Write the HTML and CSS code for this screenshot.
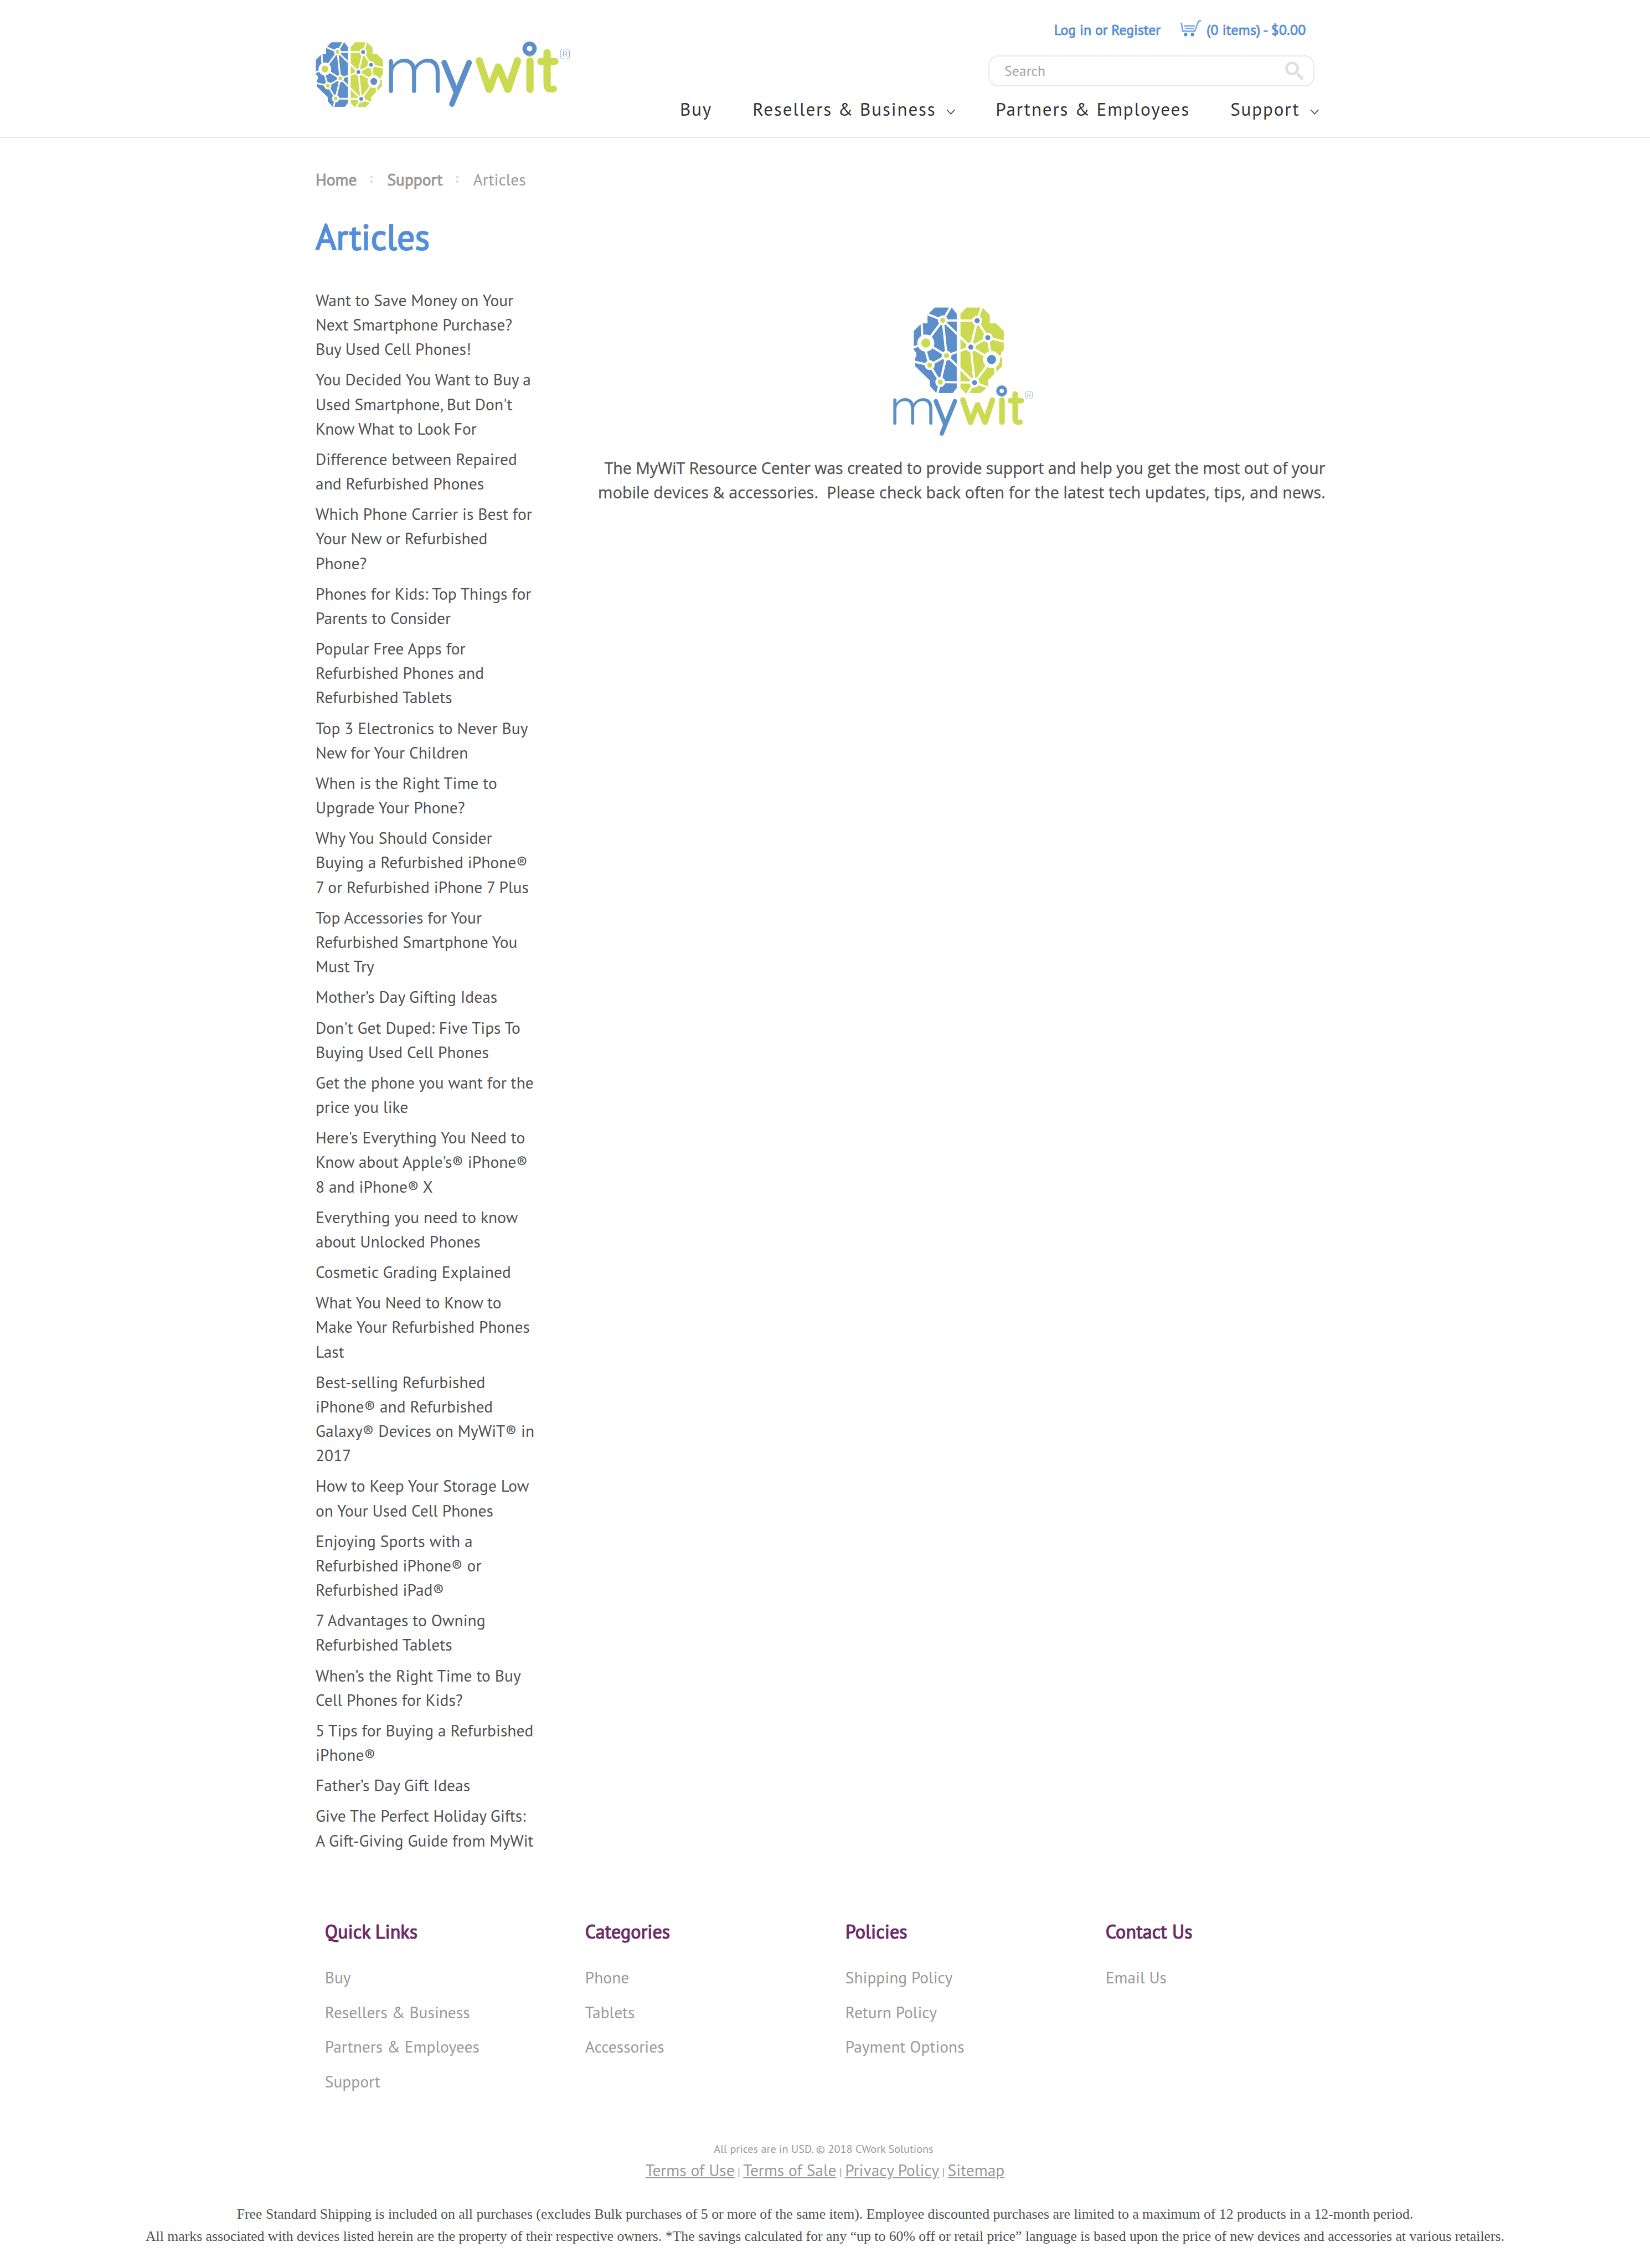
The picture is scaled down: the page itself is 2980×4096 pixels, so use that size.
FILE: index.html
```html
<!DOCTYPE html>
<html lang="en">
<head>
<meta charset="utf-8">
<title>Articles</title>
<link rel="stylesheet" href="styles.css">
</head>
<body>
<svg class="defs" width="0" height="0" aria-hidden="true">
  <defs>
    <g id="brain">
      <path fill="#5c8fc9" d="M340 66H441L470 103V540L446 570H350L311 527V495L225 411V362L232 350V332L217 315V204L262 159H298V108Z"/>
      <path fill="#cbda51" d="M528 66H622L665 110V159H701L747 204V315L731 333V345H738V410L690 458L653 495V533L610 570H522L492 540V103Z"/>
      <g stroke="#fff" stroke-width="13" fill="none">
        <path d="M436 60L388 141L298 105M388 141L288 275M269 260L263 155M388 141L410 349L288 275L212 302M388 141L553 299M388 141L590 143M277 285L311 405L410 349L553 299M410 349L373 505L311 405L220 385M410 349L575 508L373 505L354 578"/>
        <path d="M620 58L590 143L653 243L553 299L590 143M653 243L752 267M653 243L675 372L553 299L575 508L675 372M715 355L745 352M694 380L698 465M575 508L655 537M575 508L530 578"/>
      </g>
      <g fill="#fff"><circle cx="388" cy="141" r="29"/><circle cx="288" cy="275" r="50"/><circle cx="410" cy="349" r="29"/><circle cx="311" cy="405" r="29"/><circle cx="373" cy="505" r="29"/><circle cx="590" cy="143" r="29"/><circle cx="653" cy="243" r="29"/><circle cx="553" cy="299" r="29"/><circle cx="675" cy="372" r="50"/><circle cx="575" cy="508" r="29"/><circle cx="214" cy="345" r="19"/></g>
      <g fill="#cbda51"><circle cx="388" cy="141" r="15"/><circle cx="288" cy="275" r="27"/><circle cx="410" cy="349" r="15"/><circle cx="311" cy="405" r="15"/><circle cx="373" cy="505" r="15"/></g>
      <g fill="#5c8fc9"><circle cx="590" cy="143" r="15"/><circle cx="653" cy="243" r="15"/><circle cx="553" cy="299" r="15"/><circle cx="675" cy="372" r="27"/><circle cx="575" cy="508" r="15"/></g>
    </g>
    <g id="word">
      <text class="word"><tspan class="word-m" x="72.500" y="758">m</tspan><tspan class="word-y" x="327" y="754">y</tspan><tspan class="word-wit" x="488" y="750">w</tspan><tspan class="word-wit" x="707" y="750">i</tspan><tspan class="word-wit" x="773" y="750">t</tspan></text>
      <circle cx="735" cy="557" r="32" fill="#fff"/>
      <circle cx="735" cy="557" r="22.500" fill="none" stroke="#5c8fc9" stroke-width="20"/>
      <rect x="874.500" y="559" width="42" height="45" rx="14" fill="none" stroke="#7ba4d6" stroke-width="2.500"/>
      <text class="word-reg" x="895.500" y="593" text-anchor="middle">R</text>
    </g>
  </defs>
</svg>

<header class="header">
  <div class="header-inner">
    <svg class="logo" viewBox="57 0 1453 510" preserveAspectRatio="none">
      <use href="#brain" transform="translate(-98 19.100) scale(.7216 .756)"/>
      <use href="#word" transform="translate(354.500 -613.800) scale(1.255 1.294)"/>
    </svg>
    <div class="header-right">
      <div class="account">
        <a class="account-link">Log in or Register</a>
        <svg class="cart" viewBox="0 0 120 96"><g fill="none" stroke="#538ed9"><path stroke-width="8" opacity=".85" d="M0 21H6L13 66H84L103 15Q106 4 120 5"/><path stroke-width="9" opacity=".7" d="M19 35H84M25 50H78"/></g><circle cx="30" cy="86" r="10" fill="#538ed9"/><circle cx="70" cy="86" r="10" fill="#538ed9"/></svg>
        <a class="account-link items">(0 items) - $0.00</a>
      </div>
      <div class="search">
        <span class="search-text">Search</span>
        <svg class="search-icon" viewBox="0 0 108 108"><circle cx="41" cy="41" r="33" fill="none" stroke="#dedede" stroke-width="15"/><path d="M78 79L99 99" stroke="#dedede" stroke-width="17" stroke-linecap="round"/><path d="M64 64L84 84" stroke="#dedede" stroke-width="10"/></svg>
      </div>
      <nav class="nav">
        <a class="nav-item">Buy</a>
        <a class="nav-item">Resellers &amp; Business<svg class="chevron" viewBox="0 0 16 10"><path d="M1 1L8 8.500L15 1"/></svg></a>
        <a class="nav-item">Partners &amp; Employees</a>
        <a class="nav-item">Support<svg class="chevron" viewBox="0 0 16 10"><path d="M1 1L8 8.500L15 1"/></svg></a>
      </nav>
    </div>
  </div>
</header>

<main class="page">
  <div class="breadcrumb"><a class="crumb">Home</a><i class="dots"></i><a class="crumb">Support</a><i class="dots"></i><span>Articles</span></div>
  <h1 class="title">Articles</h1>
  <div class="content">
    <ul class="articles">
      <li>Want to Save Money on Your<br>Next Smartphone Purchase?<br>Buy Used Cell Phones!</li>
      <li>You Decided You Want to Buy a<br>Used Smartphone, But Don't<br>Know What to Look For</li>
      <li>Difference between Repaired<br>and Refurbished Phones</li>
      <li>Which Phone Carrier is Best for<br>Your New or Refurbished<br>Phone?</li>
      <li>Phones for Kids: Top Things for<br>Parents to Consider</li>
      <li>Popular Free Apps for<br>Refurbished Phones and<br>Refurbished Tablets</li>
      <li>Top 3 Electronics to Never Buy<br>New for Your Children</li>
      <li>When is the Right Time to<br>Upgrade Your Phone?</li>
      <li>Why You Should Consider<br>Buying a Refurbished iPhone®<br>7 or Refurbished iPhone 7 Plus</li>
      <li>Top Accessories for Your<br>Refurbished Smartphone You<br>Must Try</li>
      <li>Mother’s Day Gifting Ideas</li>
      <li>Don't Get Duped: Five Tips To<br>Buying Used Cell Phones</li>
      <li>Get the phone you want for the<br>price you like</li>
      <li>Here's Everything You Need to<br>Know about Apple's® iPhone®<br>8 and iPhone® X</li>
      <li>Everything you need to know<br>about Unlocked Phones</li>
      <li>Cosmetic Grading Explained</li>
      <li>What You Need to Know to<br>Make Your Refurbished Phones<br>Last</li>
      <li>Best-selling Refurbished<br>iPhone® and Refurbished<br>Galaxy® Devices on MyWiT® in<br>2017</li>
      <li>How to Keep Your Storage Low<br>on Your Used Cell Phones</li>
      <li>Enjoying Sports with a<br>Refurbished iPhone® or<br>Refurbished iPad®</li>
      <li>7 Advantages to Owning<br>Refurbished Tablets</li>
      <li>When’s the Right Time to Buy<br>Cell Phones for Kids?</li>
      <li>5 Tips for Buying a Refurbished<br>iPhone®</li>
      <li>Father’s Day Gift Ideas</li>
      <li>Give The Perfect Holiday Gifts:<br>A Gift-Giving Guide from MyWit</li>
    </ul>
    <section class="intro">
      <svg class="intro-logo" viewBox="4 -4 990 870"><use href="#brain"/><use href="#word"/></svg>
      <p class="intro-text"><span class="l1">The MyWiT Resource Center was created to provide support and help you get the most out of your</span><br><span class="l2">mobile devices &amp; accessories.&nbsp; Please check back often for the latest tech updates, tips, and news.</span></p>
    </section>
  </div>
</main>

<footer class="footer">
  <div class="footer-cols">
    <div><h2 class="footer-head">Quick Links</h2><ul class="footer-list"><li>Buy</li><li>Resellers &amp; Business</li><li>Partners &amp; Employees</li><li>Support</li></ul></div>
    <div><h2 class="footer-head">Categories</h2><ul class="footer-list"><li>Phone</li><li>Tablets</li><li>Accessories</li></ul></div>
    <div><h2 class="footer-head">Policies</h2><ul class="footer-list"><li>Shipping Policy</li><li>Return Policy</li><li>Payment Options</li></ul></div>
    <div><h2 class="footer-head">Contact Us</h2><ul class="footer-list"><li>Email Us</li></ul></div>
  </div>
  <p class="copyright">All prices are in USD. © 2018 CWork Solutions</p>
  <p class="terms"><a>Terms of Use</a> | <a>Terms of Sale</a> | <a>Privacy Policy</a> | <a>Sitemap</a></p>
  <p class="legal">Free Standard Shipping is included on all purchases (excludes Bulk purchases of 5 or more of the same item). Employee discounted purchases are limited to a maximum of 12 products in a 12-month period.<br>All marks associated with devices listed herein are the property of their respective owners. *The savings calculated for any “up to 60% off or retail price” language is based upon the price of new devices and accessories at various retailers.</p>
</footer>
</body>
</html>
```
FILE: styles.css
```css
* { box-sizing: border-box; margin: 0; padding: 0; }
html { background: #fff; }
body {
  width: 2980px;
  height: 4096px;
  overflow: hidden;
  font: 29.44px/44.16px "PT Sans", "Noto Sans", sans-serif;
  color: #505050;
}
ul { list-style: none; }
.defs { display: block; }

/* header */
.header { height: 248.5px; border-bottom: 2px solid #e9e9e9; }
.header-inner { width: 1840px; margin: 0 auto; display: flex; justify-content: space-between; }
.logo { width: 460.3px; height: 156.4px; margin-top: 55.2px; }
.header-right { display: flex; flex-direction: column; align-items: flex-end; padding-top: 35.6px; }
.account { display: flex; align-items: center; height: 36px; padding-right: 51.5px; color: #538ed9; font-size: 25.76px; line-height: 36px; }
.account-link { -webkit-text-stroke: 0.9px #538ed9; white-space: nowrap; }
.items { letter-spacing: 0.2px; }
.cart { width: 37px; height: 29.5px; margin: -5px 10px 0 36px; }
.search { display: flex; align-items: center; justify-content: space-between; width: 589px; height: 56.6px; margin: 28px 36.4px 0 0; padding: 0 18px 0 27.5px; border: 2px solid #e8e8e8; border-radius: 18px; font-size: 25.76px; color: #a5a5a5; }
.search-icon { width: 33.1px; height: 33.1px; }
.nav { display: flex; gap: 73.2px; margin-top: 18px; padding-right: 28px; font-size: 33.12px; line-height: 46px; letter-spacing: 1.84px; color: #333; }
.nav-item { white-space: nowrap; display: flex; align-items: center; }
.chevron { width: 16.5px; height: 10.3px; margin: 10px 0 0 18px; fill: none; stroke: #444; stroke-width: 1.6; }

/* page */
.page { width: 1840px; margin: 0 auto; padding-top: 53.4px; }
.breadcrumb { display: flex; align-items: center; color: #999; }
.crumb { -webkit-text-stroke: 1px #999; }
.dots { width: 4px; height: 12px; margin: 0 26px 0 25px; border: solid #ddd; border-width: 4px 0; }
.title { margin-top: 39.6px; font-size: 63.8px; line-height: 84px; font-weight: 400; color: #538ed9; -webkit-text-stroke: 2px #538ed9; }
.content { display: flex; height: 2996.5px; padding-top: 50.3px; }
.articles { width: 507px; white-space: nowrap; letter-spacing: 0.03px; }
.articles li { margin-bottom: 11.04px; }
.intro { width: 1320px; padding-top: 14px; text-align: center; }
.intro-logo { display: block; width: 303.6px; height: 266.8px; margin: 0 auto 22px; }
.intro-text { white-space: nowrap; font-size: 28.5px; line-height: 44px; font-family: "Trebuchet MS", "Open Sans", sans-serif; -webkit-text-stroke: 0.3px #505050; }
.l1 { margin-left: 11px; letter-spacing: -0.03px; }
.l2 { letter-spacing: 0.215px; }

/* logo lettering */
.word { stroke-linejoin: round; stroke-linecap: round; }
.word-m { font: 400 305px "Quicksand", "Lato", sans-serif; fill: #5c8fc9; }
.word-y { font: 400 285px "Varela Round", "Lato", sans-serif; fill: #5c8fc9; }
.word-wit { font: 400 280px "Quicksand", "Lato", sans-serif; fill: #cbda51; stroke: #cbda51; stroke-width: 16px; }
.word-reg { font: 32px "Liberation Sans", sans-serif; fill: #7ba4d6; }

/* footer */
.footer-cols { width: 1880px; margin: 0 0 0 586.8px; display: grid; grid-template-columns: repeat(4, 470px); height: 398px; }
.footer-head { margin-bottom: 30px; font-size: 34px; line-height: 44px; font-weight: 400; letter-spacing: 0.1px; color: #6b2a68; -webkit-text-stroke: 1.2px #6b2a68; }
.footer-list { line-height: 62.56px; color: #999; }
.copyright { text-align: center; padding-right: 5px; font-size: 20.24px; line-height: 34.8px; color: #999; }
.terms { text-align: center; font-size: 20.24px; line-height: 40px; color: #999; }
.terms a { font-size: 29.44px; text-decoration: underline; }
.legal { margin-top: 36.5px; text-align: center; font: 25.76px/39.1px "Liberation Serif", serif; white-space: nowrap; }
```
